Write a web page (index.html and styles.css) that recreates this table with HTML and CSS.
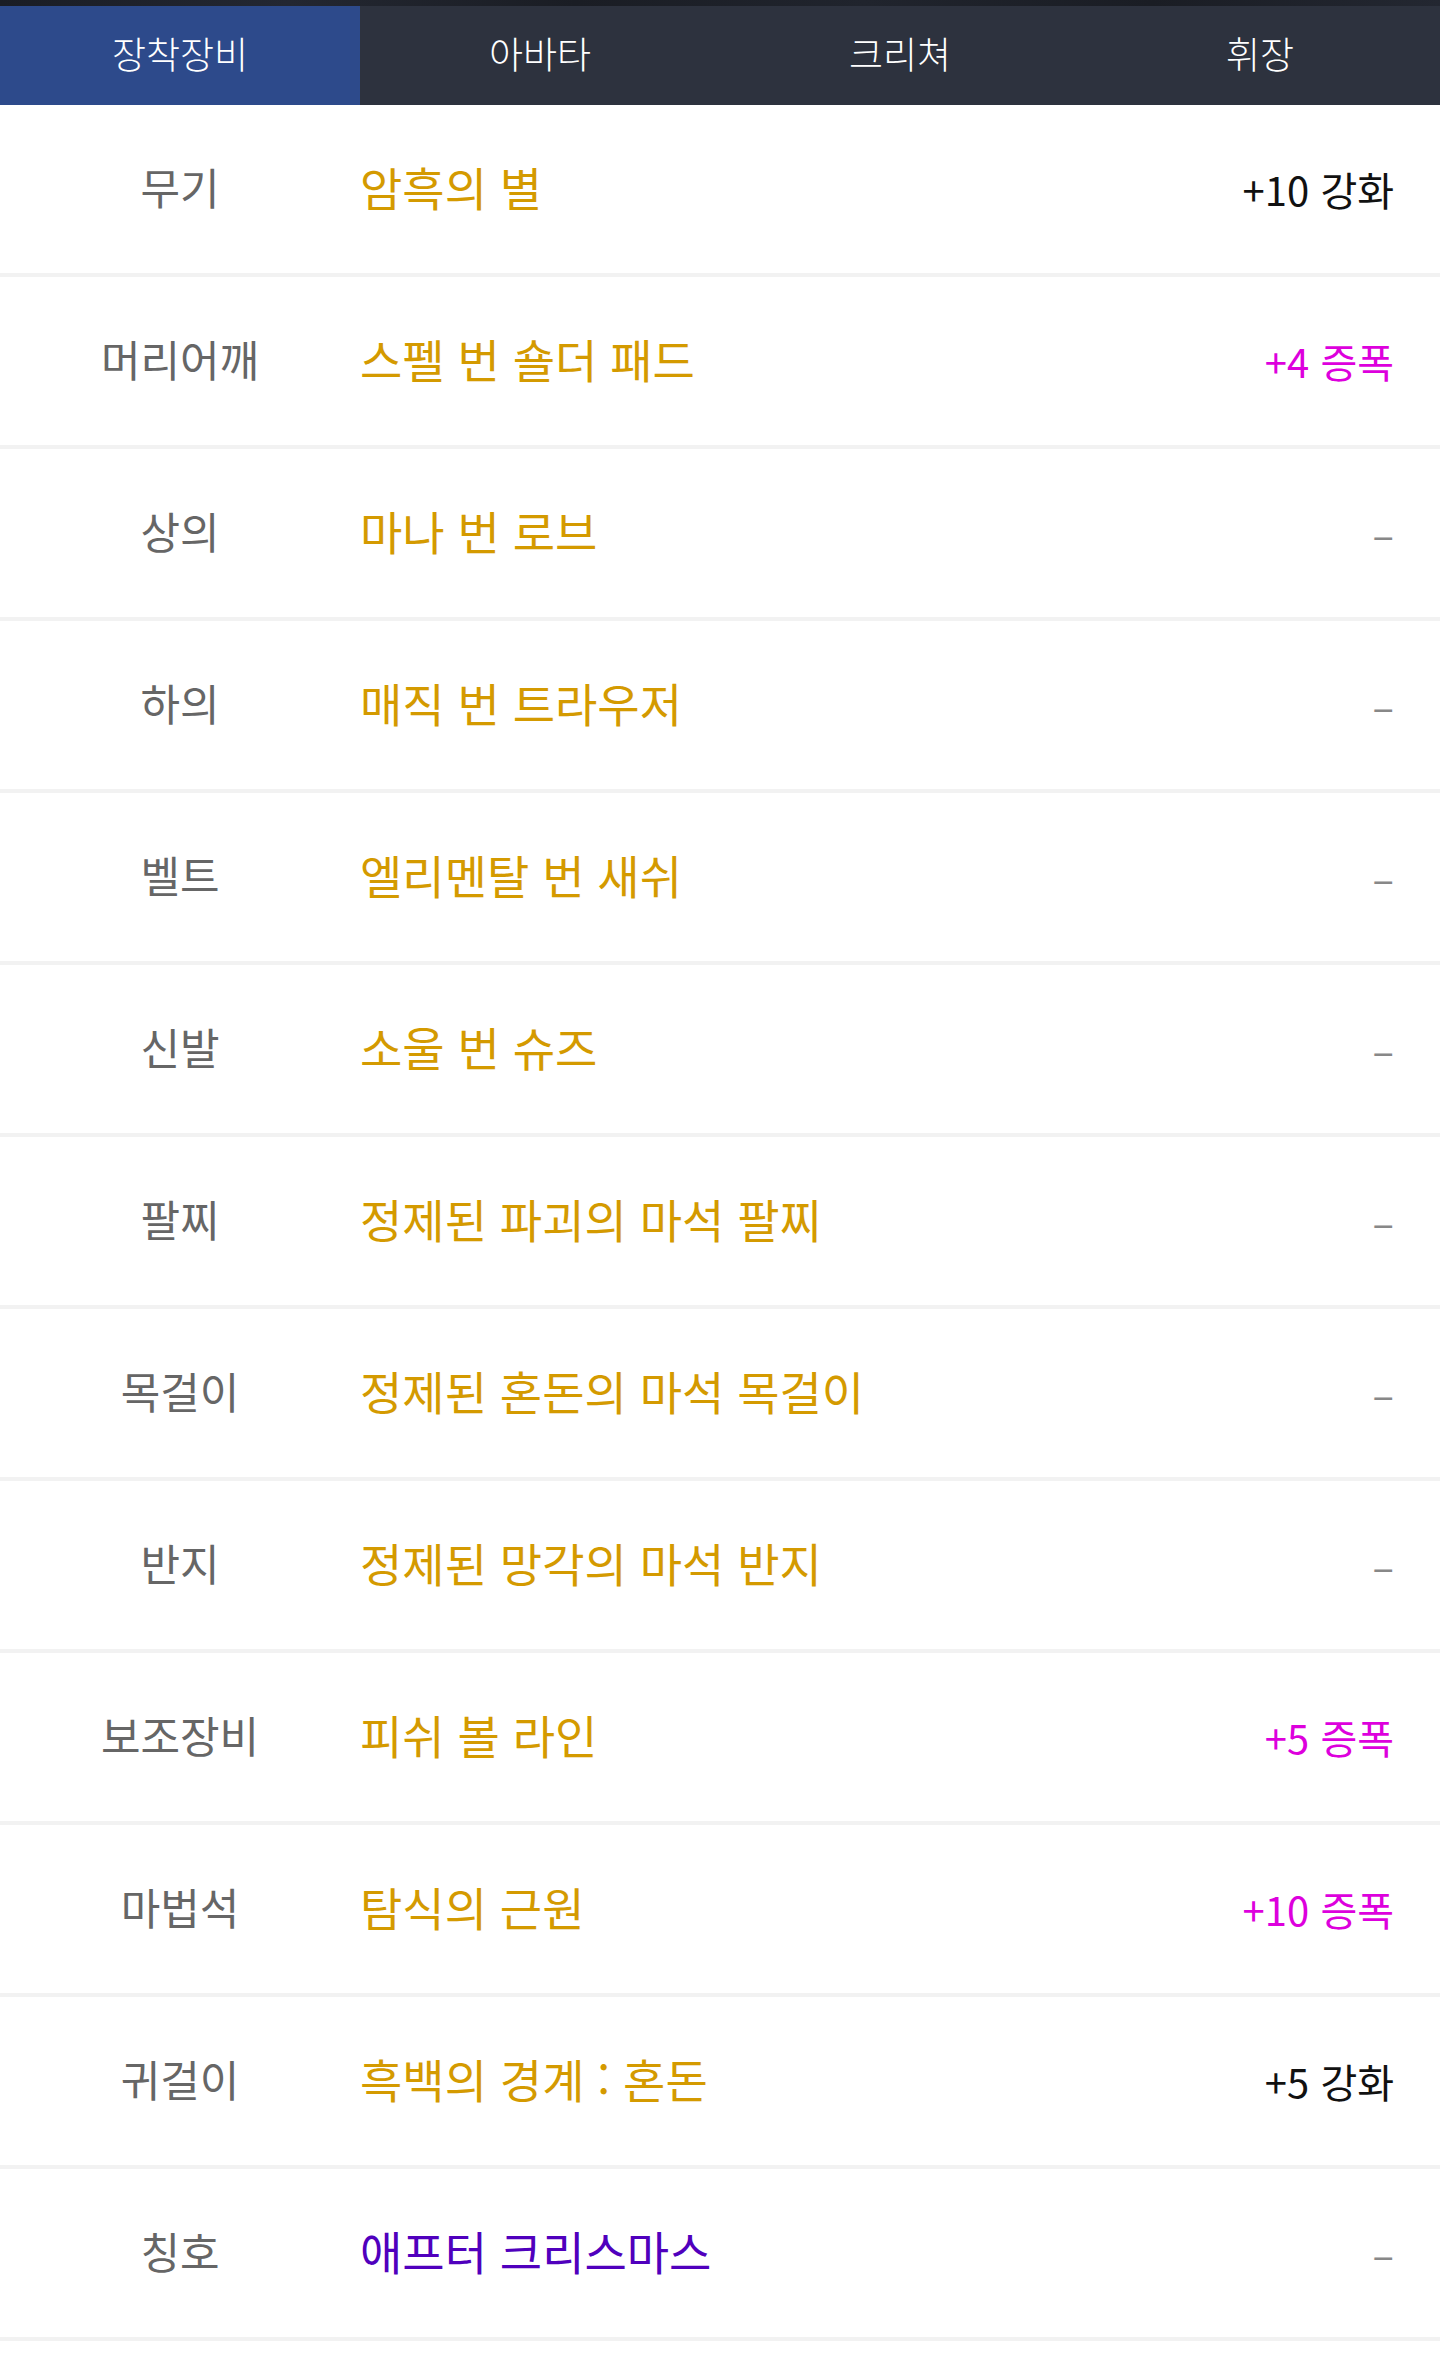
FILE: index.html
```html
<!DOCTYPE html>
<html lang="ko">
<head>
<meta charset="utf-8">
<title>장착장비</title>
<link rel="stylesheet" href="styles.css">
</head>
<body>
<div class="topstrip"></div>
<nav class="tabs">
  <div class="tab active">장착장비</div>
  <div class="tab">아바타</div>
  <div class="tab">크리쳐</div>
  <div class="tab">휘장</div>
</nav>
<ul class="list">
  <li class="row"><span class="slot">무기</span><span class="item">암흑의 별</span><span class="val plain">+10 강화</span></li>
  <li class="row"><span class="slot">머리어깨</span><span class="item">스펠 번 숄더 패드</span><span class="val amp">+4 증폭</span></li>
  <li class="row"><span class="slot">상의</span><span class="item">마나 번 로브</span><span class="val none">–</span></li>
  <li class="row"><span class="slot">하의</span><span class="item">매직 번 트라우저</span><span class="val none">–</span></li>
  <li class="row"><span class="slot">벨트</span><span class="item">엘리멘탈 번 새쉬</span><span class="val none">–</span></li>
  <li class="row"><span class="slot">신발</span><span class="item">소울 번 슈즈</span><span class="val none">–</span></li>
  <li class="row"><span class="slot">팔찌</span><span class="item">정제된 파괴의 마석 팔찌</span><span class="val none">–</span></li>
  <li class="row"><span class="slot">목걸이</span><span class="item">정제된 혼돈의 마석 목걸이</span><span class="val none">–</span></li>
  <li class="row"><span class="slot">반지</span><span class="item">정제된 망각의 마석 반지</span><span class="val none">–</span></li>
  <li class="row"><span class="slot">보조장비</span><span class="item">피쉬 볼 라인</span><span class="val amp">+5 증폭</span></li>
  <li class="row"><span class="slot">마법석</span><span class="item">탐식의 근원</span><span class="val amp">+10 증폭</span></li>
  <li class="row"><span class="slot">귀걸이</span><span class="item">흑백의 경계 : 혼돈</span><span class="val plain">+5 강화</span></li>
  <li class="row"><span class="slot">칭호</span><span class="item title">애프터 크리스마스</span><span class="val none">–</span></li>
</ul>
</body>
</html>
```

FILE: styles.css
```css
html, body {
  margin: 0;
  padding: 0;
  background: #ffffff;
  font-family: "Noto Sans CJK KR", "Noto Sans", sans-serif;
}

.topstrip {
  height: 6px;
  background: linear-gradient(90deg, #1a1d24 0%, #232731 20%, #1a1d24 40%, #20242d 60%, #1a1d24 80%, #232731 100%);
}

.tabs {
  display: grid;
  grid-template-columns: repeat(4, 1fr);
  height: 99px;
  background: #2d323e;
}

.tab {
  display: flex;
  align-items: center;
  justify-content: center;
  padding-bottom: 6px;
  color: #ffffff;
  font-size: 37px;
  font-weight: 300;
}

.tab.active {
  background: #2d4a8b;
}

.list {
  list-style: none;
  margin: 0;
  padding: 0;
}

.row {
  box-sizing: border-box;
  display: flex;
  align-items: center;
  height: 172px;
  border-bottom: 4px solid #f2f2f2;
  padding: 0 46px 6px 0;
}

.slot {
  width: 360px;
  flex: none;
  text-align: center;
  color: #666666;
  font-size: 43px;
}

.item {
  flex: 1;
  color: #d49a00;
  font-size: 46px;
}

.item.title {
  color: #5000bd;
}

.val {
  font-size: 40px;
  text-align: right;
  padding-top: 6px;
}

.val.plain {
  color: #111111;
}

.val.amp {
  color: #dd00dd;
}

.val.none {
  color: #888888;
}
```
